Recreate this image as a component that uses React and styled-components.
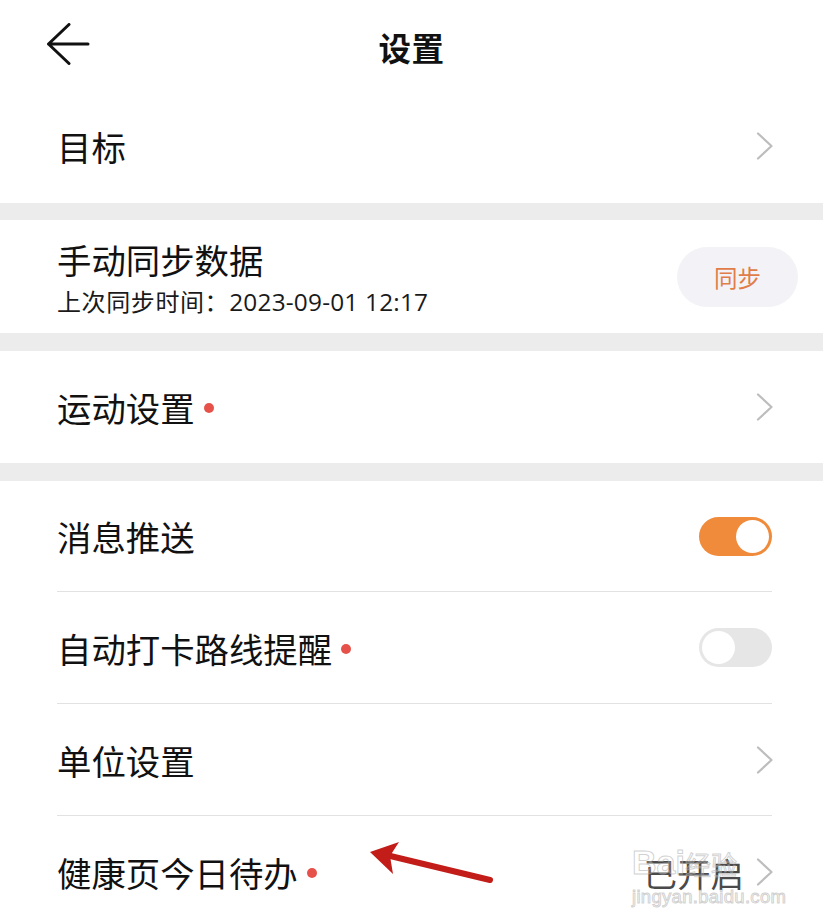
import React from "react";
import styled, { createGlobalStyle } from "styled-components";

const Global = createGlobalStyle`
  html, body { margin: 0; padding: 0; background: #ffffff; }
  body { font-family: "Noto Sans CJK SC", "Noto Sans", sans-serif; color: #111; }
`;

const Page = styled.div`
  position: relative;
  width: 823px;
  min-height: 924px;
  background: #fff;
  display: flex;
  flex-direction: column;
  overflow: hidden;
`;

const Header = styled.header`
  height: 88px;
  display: grid;
  grid-template-columns: 120px 1fr 120px;
  align-items: center;
`;

const BackButton = styled.button`
  border: 0;
  background: none;
  padding: 0;
  margin-left: 46px;
  width: 44px;
  height: 42px;
  display: flex;
  align-items: center;
  justify-content: center;
  margin-top: -1px;
`;

const Title = styled.h1`
  margin: 0;
  text-align: center;
  font-size: 32.5px;
  font-weight: 700;
  letter-spacing: 0.5px;
  margin-top: 4px;
`;

const Band = styled.div`
  height: ${(p) => p.$h || 18}px;
  background: #ececec;
  flex: none;
`;

const Row = styled.div`
  margin: 0 51px 0 57px;
  height: ${(p) => p.$h || 111}px;
  display: flex;
  align-items: center;
  justify-content: space-between;
  border-bottom: ${(p) => (p.$divider ? "1px solid #e2e2e2" : "none")};
  flex: none;
`;

const Label = styled.div`
  display: flex;
  align-items: center;
  font-size: 34.4px;
  line-height: 40px;
  font-weight: 400;
  color: #111;
`;

const Dot = styled.span`
  width: 10px;
  height: 10px;
  border-radius: 50%;
  background: #e6524a;
  margin-left: 9px;
  margin-top: 2px;
`;

const TextBlock = styled.div`
  display: flex;
  flex-direction: column;
  padding-top: 2px;
`;

const Sub = styled.div`
  font-size: 24px;
  line-height: 30px;
  margin-top: 7px;
  color: #1a1a1a;
  letter-spacing: 0.6px;
`;

const Digits = styled.span`
  font-family: "Open Sans", "Noto Sans", sans-serif;
  font-size: 24.4px;
  letter-spacing: 0.2px;
`;

const SyncButton = styled.button`
  border: 0;
  width: 121px;
  height: 60px;
  border-radius: 30px;
  background: #f3f2f6;
  color: #e07d48;
  font-family: inherit;
  font-size: 23.5px;
  margin-right: -26px;
  padding: 0;
`;

const Toggle = styled.div`
  width: 73px;
  height: 39px;
  border-radius: 20px;
  background: ${(p) => (p.$on ? "#ef8b3b" : "#e6e6e6")};
  display: flex;
  align-items: center;
  justify-content: ${(p) => (p.$on ? "flex-end" : "flex-start")};
  padding: 0 3px;
  box-sizing: border-box;
`;

const Knob = styled.div`
  width: 33px;
  height: 33px;
  border-radius: 50%;
  background: #fff;
`;

const Right = styled.div`
  display: flex;
  align-items: center;
  gap: 12px;
`;

const Value = styled.span`
  font-size: 33.5px;
  color: #4a4a4a;
`;

const Chevron = () => (
  <svg width="18" height="28" viewBox="0 0 18 28" style={{ marginRight: -2 }}>
    <path d="M2 1.5 L15.5 14 L2 26.5" fill="none" stroke="#bdbdbd" strokeWidth="2.2" strokeLinejoin="round" strokeLinecap="round" />
  </svg>
);

const Annotation = styled.svg`
  position: absolute;
  left: 360px;
  top: 836px;
  pointer-events: none;
`;

const Watermark = styled.div`
  position: absolute;
  left: 632px;
  top: 842px;
  pointer-events: none;
  display: flex;
  flex-direction: column;
  align-items: flex-start;
  color: rgba(255, 255, 255, 0.2);
  -webkit-text-stroke: 1px rgba(170, 170, 170, 0.55);
  font-family: "Liberation Sans", "Noto Sans CJK SC", sans-serif;
`;

const WmTop = styled.div`
  display: flex;
  align-items: flex-end;
  font-size: 34px;
  font-weight: 700;
  line-height: 40px;
`;

const WmCjk = styled.span`
  font-size: 26px;
  font-weight: 400;
  line-height: 36px;
  font-family: "Noto Sans CJK SC", sans-serif;
`;

const WmBottom = styled.div`
  font-size: 18.5px;
  line-height: 22px;
  letter-spacing: 0.3px;
  margin-top: 4px;
`;

export default function App() {
  return (
    <>
      <Global />
      <Page>
        <Header>
          <BackButton aria-label="返回">
            <svg width="44" height="42" viewBox="0 0 44 42">
              <path d="M23 1.5 L2.5 21 L23 40.5 M2.5 21 H42" fill="none" stroke="#111" strokeWidth="3" strokeLinecap="round" strokeLinejoin="round" />
            </svg>
          </BackButton>
          <Title>设置</Title>
          <div />
        </Header>

        <Row $h={115}>
          <Label>目标</Label>
          <Chevron />
        </Row>

        <Band $h={17} />

        <Row $h={113}>
          <TextBlock>
            <Label>手动同步数据</Label>
            <Sub>
              上次同步时间：<Digits>2023-09-01 12:17</Digits>
            </Sub>
          </TextBlock>
          <SyncButton>同步</SyncButton>
        </Row>

        <Band $h={18} />

        <Row $h={112}>
          <Label>
            运动设置<Dot />
          </Label>
          <Chevron />
        </Row>

        <Band $h={18} />

        <Row $h={110} $divider>
          <Label>消息推送</Label>
          <Toggle $on>
            <Knob />
          </Toggle>
        </Row>
        <Row $h={111} $divider>
          <Label>
            自动打卡路线提醒<Dot />
          </Label>
          <Toggle>
            <Knob />
          </Toggle>
        </Row>
        <Row $h={111} $divider>
          <Label>单位设置</Label>
          <Chevron />
        </Row>
        <Row $h={112}>
          <Label>
            健康页今日待办<Dot />
          </Label>
          <Right>
            <Value>已开启</Value>
            <Chevron />
          </Right>
        </Row>

        <Watermark>
          <WmTop>
            Bai<WmCjk>经验</WmCjk>
          </WmTop>
          <WmBottom>jingyan.baidu.com</WmBottom>
        </Watermark>

        <Annotation width="140" height="56" viewBox="0 0 140 56">
          <path d="M130 44 L22 18" stroke="#c21d18" strokeWidth="6" strokeLinecap="round" fill="none" />
          <path d="M10 16 L39 6 L30 20 L33 38 Z" fill="#c21d18" />
        </Annotation>
      </Page>
    </>
  );
}
